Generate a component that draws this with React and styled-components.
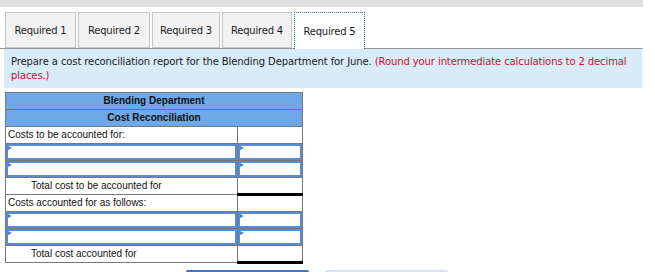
import React from 'react';
import styled, { createGlobalStyle } from 'styled-components';

const GlobalStyle = createGlobalStyle`
  body {
    margin: 0;
    background: #fff;
    font-family: 'DejaVu Sans', Verdana, sans-serif;
    color: #222;
  }
`;

const Page = styled.div`
  width: 643px;
`;

const TopBar = styled.div`
  height: 7px;
  background: #e0e0e0;
`;

const TabBar = styled.div`
  display: flex;
  gap: 2px;
  margin-top: 5px;
  padding-left: 5px;
  height: 36px;
  border-bottom: 1px solid #9a9a9a;
`;

const Tab = styled.div`
  display: flex;
  align-items: center;
  justify-content: center;
  width: ${({ $w }) => $w}px;
  box-sizing: border-box;
  height: ${({ $active }) => ($active ? '37px' : '36px')};
  background: ${({ $active }) => ($active ? '#fff' : '#f2f2f2')};
  border: ${({ $active }) => ($active ? '1px dotted #2f62b0' : '1px solid #c6c6c6')};
  border-bottom: ${({ $active }) => ($active ? 'none' : '1px solid #c6c6c6')};
  font-size: 10px;
  letter-spacing: -0.2px;
  color: #1a1a1a;
`;

const Info = styled.div`
  margin: 0 1px 0 4px;
  padding: 6px 1px 5px 7px;
  background: #d9ebf9;
  font-size: 10px;
  letter-spacing: -0.1px;
  line-height: 14px;
  color: #1a1a1a;
`;

const Note = styled.span`
  color: #c8102e;
`;

const Table = styled.table`
  margin: 4px 0 0 5px;
  width: 298px;
  border-collapse: collapse;
  font-family: 'Liberation Sans', Arial, sans-serif;
  font-size: 10px;
  line-height: 12px;
  color: #111;
`;

const Row = styled.tr`
  height: 17px;
`;

const HeadCell = styled.td`
  padding: 0;
  background: #6fa8e8;
  border: 1px solid #777;
  text-align: center;
  font-weight: bold;
`;

const LabelCell = styled.td`
  padding: 0 0 0 ${({ $indent }) => ($indent ? '25px' : '2px')};
  border: 1px solid #777;
  white-space: nowrap;
`;

const AmountCell = styled.td`
  width: 64px;
  padding: 0;
  border: 1px solid #777;
  border-top: ${({ $total }) => ($total ? '1px solid #111' : '1px solid #777')};
  border-bottom: ${({ $total }) => ($total ? '3px solid #000' : '1px solid #777')};
`;

const InputCell = styled.td`
  padding: 0;
  border: 1px solid #777;
`;

const InputBox = styled.div`
  position: relative;
  height: 16px;
  box-sizing: border-box;
  border: 2px solid #5b8bd2;
  background: #fff;

  &:before {
    content: '';
    position: absolute;
    left: 0;
    top: 0;
    border-left: 4px solid #3f7fd6;
    border-top: 2.5px solid transparent;
    border-bottom: 2.5px solid transparent;
  }
`;

const Nav = styled.div`
  display: flex;
  gap: 16px;
  margin-top: 6px;
  padding-left: 186px;
`;

const NavButton = styled.div`
  width: 123px;
  height: 20px;
  border-top: 2px solid ${({ $primary }) => ($primary ? '#3a78c8' : '#d6e5f4')};
  border-radius: 2px 2px 0 0;
`;

const tabs = [
  { label: 'Required 1', w: 71 },
  { label: 'Required 2', w: 72 },
  { label: 'Required 3', w: 68 },
  { label: 'Required 4', w: 70 },
  { label: 'Required 5', w: 71 },
];

const rows = [
  { type: 'label', text: 'Costs to be accounted for:' },
  { type: 'input' },
  { type: 'input' },
  { type: 'total', text: 'Total cost to be accounted for' },
  { type: 'label', text: 'Costs accounted for as follows:' },
  { type: 'input' },
  { type: 'input' },
  { type: 'total', text: 'Total cost accounted for' },
];

const App = () => (
  <Page>
    <GlobalStyle />
    <TopBar />
    <TabBar>
      {tabs.map((t, i) => (
        <Tab key={t.label} $w={t.w} $active={i === 4}>
          {t.label}
        </Tab>
      ))}
    </TabBar>
    <Info>
      Prepare a cost reconciliation report for the Blending Department for June.{' '}
      <Note>(Round your intermediate calculations to 2 decimal places.)</Note>
    </Info>
    <Table>
      <tbody>
        <Row>
          <HeadCell colSpan={2}>Blending Department</HeadCell>
        </Row>
        <Row>
          <HeadCell colSpan={2}>Cost Reconciliation</HeadCell>
        </Row>
        {rows.map((r, i) => {
          if (r.type === 'input') {
            return (
              <Row key={i}>
                <InputCell>
                  <InputBox />
                </InputCell>
                <InputCell>
                  <InputBox />
                </InputCell>
              </Row>
            );
          }
          return (
            <Row key={i}>
              <LabelCell $indent={r.type === 'total'}>{r.text}</LabelCell>
              <AmountCell $total={r.type === 'total'} />
            </Row>
          );
        })}
      </tbody>
    </Table>
    <Nav>
      <NavButton $primary />
      <NavButton />
    </Nav>
  </Page>
);

export default App;
